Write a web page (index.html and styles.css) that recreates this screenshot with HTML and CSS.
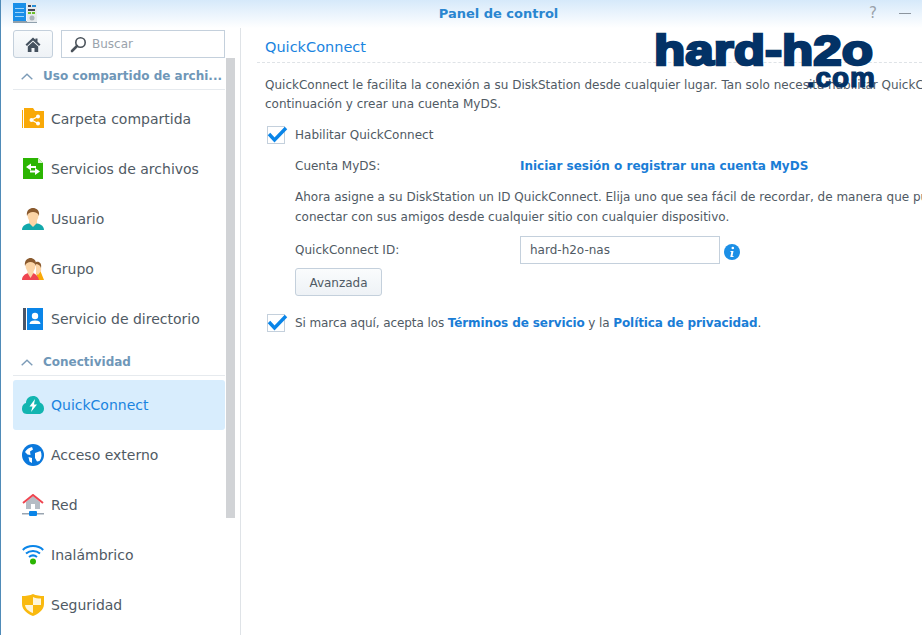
FILE: index.html
```html
<!DOCTYPE html>
<html lang="es">
<head>
<meta charset="utf-8">
<title>Panel de control</title>
<link rel="stylesheet" href="styles.css">
</head>
<body>
<div class="window">
  <header class="titlebar">
    <svg class="app-icon" width="24" height="20" viewBox="0 0 24 20">
      <rect x="0" y="0" width="13" height="20" fill="#1a8fe8"/>
      <rect x="0" y="18" width="24" height="2" fill="#8fa0ad"/>
      <rect x="2" y="5" width="9" height="1" fill="#9fd4fa"/><rect x="2" y="9" width="9" height="1" fill="#9fd4fa"/><rect x="2" y="13" width="9" height="1" fill="#9fd4fa"/>
      <rect x="14" y="0" width="10" height="19" fill="#e6eaed"/>
      <rect x="15" y="2" width="3" height="2" fill="#445"/><rect x="19" y="2" width="4" height="2" fill="#2a8fd8"/>
      <rect x="15" y="6" width="7" height="2" fill="#445"/><rect x="15" y="9" width="3" height="2" fill="#6bbf2a"/><rect x="19" y="9" width="3" height="2" fill="#6bbf2a"/>
      <circle cx="19" cy="15" r="2.500" fill="#aab3ba"/>
    </svg>
    <h1 class="app-title">Panel de control</h1>
    <div class="win-actions">
      <span class="win-help">?</span>
      <span class="win-min"></span>
    </div>
  </header>
  <div class="body">
    <aside class="sidebar">
      <div class="toolbar">
        <button class="home" aria-label="Inicio">
          <svg width="16" height="15" viewBox="0 0 16 15"><path d="M8 0.5 L0.5 7.5 L2 9 L8 3.4 L14 9 L15.500 7.500 L12.500 4.700 L12.500 1.500 L10.500 1.500 L10.500 2.800 Z M8 4.800 L2.800 9.600 L2.800 15 L6.500 15 L6.500 11 L9.500 11 L9.500 15 L13.200 15 L13.200 9.600 Z" fill="#44515e"/></svg>
        </button>
        <div class="search">
          <svg width="17" height="17" viewBox="0 0 17 17"><circle cx="10.500" cy="6.500" r="4.700" fill="none" stroke="#4a525a" stroke-width="1.600"/><path d="M7 10 L2 15" stroke="#4a525a" stroke-width="2.600" stroke-linecap="round"/></svg>
          <span>Buscar</span>
        </div>
      </div>
      <div class="nav-scroll">
        <div class="group"><svg width="12" height="7" viewBox="0 0 12 7"><path d="M0.700 6.300 L6 1.200 L11.300 6.300" fill="none" stroke="#7d9cb8" stroke-width="1.400"/></svg><span>Uso compartido de archi...</span></div>
        <a class="item">
          <svg class="ico" width="22" height="22" viewBox="0 0 22 22"><rect x="0" y="2" width="1" height="18" fill="#f9a908"/><path d="M2 0 H11 L13 3 H22 V20 H2 Z" fill="#f9a908"/><g fill="#fff"><circle cx="9.500" cy="12" r="2"/><circle cx="16" cy="8.500" r="2"/><circle cx="16" cy="15.500" r="2"/></g><path d="M16 8.500 L9.500 12 L16 15.500" stroke="#fff" stroke-width="1.200" fill="none"/></svg>
          <span>Carpeta compartida</span></a>
        <a class="item">
          <svg class="ico" width="22" height="22" viewBox="0 0 22 22"><path d="M1 0 H16 L21 5 V21 H1 Z" fill="#2bb502"/><path d="M16 0 L21 5 H16 Z" fill="#d8f3cc"/><path d="M9 5.500 L4 9 L9 12.500 V10 H14 V8 H9 Z M13 10 L18 13.500 L13 17 V14.600 H8 V12.600 H13 Z" fill="#fff"/></svg>
          <span>Servicios de archivos</span></a>
        <a class="item">
          <svg class="ico" width="22" height="22" viewBox="0 0 22 22"><path d="M0 22 C0 17 5 16 8 15 H14 C17 16 22 17 22 22 Z" fill="#12a8ab"/><path d="M11 19 L7 15 V12 H15 V15 Z" fill="#fbd4a6"/><ellipse cx="11" cy="7.500" rx="5.500" ry="7" fill="#fbd4a6"/><path d="M5 8 C4 2 8 0 11 0 C14 0 18 2 17 8 C16 5 14 4 11 4 C8 4 6 5 5 8 Z" fill="#8a5a2e"/></svg>
          <span>Usuario</span></a>
        <a class="item">
          <svg class="ico" width="22" height="22" viewBox="0 0 22 22"><path d="M14 14 L18 12 L22 22 H16 Z" fill="#f9a908"/><path d="M14 5 C17 3 20 6 19 13 L16 17 L14 15 Z" fill="#fbd4a6"/><path d="M14 4 C17 3 20 5 19 10 C18 7 16 6 14 6 Z" fill="#8a5a2e"/><path d="M0 22 C0 18 3 16 6 15 H11 C14 16 16 18 17 22 Z" fill="#ef4550"/><path d="M8.500 20 L5.500 15 V12 H11.500 V15 Z" fill="#fbd4a6"/><ellipse cx="8.500" cy="7.500" rx="5" ry="7" fill="#fbd4a6"/><path d="M3 8 C2 2 6 0 8.500 0 C11 0 15 2 14 8 C13 5 11 4 8.500 4 C6 4 4 5 3 8 Z" fill="#8a5a2e"/></svg>
          <span>Grupo</span></a>
        <a class="item">
          <svg class="ico" width="22" height="22" viewBox="0 0 22 22"><rect x="1" y="0" width="3" height="22" fill="#4a5568"/><rect x="5" y="0" width="16" height="22" fill="#0a85e8"/><circle cx="13" cy="8" r="3.200" fill="#fff"/><path d="M7.500 16 C8 13 10 12.500 13 12.500 C16 12.500 18 13 18.500 16 Z" fill="#fff"/></svg>
          <span>Servicio de directorio</span></a>
        <div class="group"><svg width="12" height="7" viewBox="0 0 12 7"><path d="M0.700 6.300 L6 1.200 L11.300 6.300" fill="none" stroke="#7d9cb8" stroke-width="1.400"/></svg><span>Conectividad</span></div>
        <a class="item active">
          <svg class="ico" width="22" height="22" viewBox="0 1 22 20"><path d="M5 20 C1 20 0 17 0 14.500 C0 11 2 9.500 4 9 C4 5 7 2 11 2 C15 2 17 4.500 18 8.500 C20.500 9.500 22 11.500 22 14.500 C22 17.500 20 20 17 20 Z" fill="#12b5b0"/><path d="M13 5 L7.500 12.500 H10.500 L9 18 L15 10.500 H12 Z" fill="#fff"/></svg>
          <span>QuickConnect</span></a>
        <a class="item">
          <svg class="ico" width="22" height="22" viewBox="0 0 22 22"><circle cx="11" cy="11" r="11" fill="#0a78dc"/><path d="M3 8 C4.500 5.500 7 3.500 10 3 L11 5.500 L8 7.500 L8.500 11 L5.500 10.500 Z M13 9 L18.500 7 C20 10 20 14 17.500 17 L15 17.500 L13 14 Z M6.500 13 L10 14 L10 19 L7.500 17.500 Z" fill="#fff"/></svg>
          <span>Acceso externo</span></a>
        <a class="item">
          <svg class="ico" width="22" height="22" viewBox="0 0 22 22"><path d="M4 8 L11 2 L18 8 V15 H4 Z" fill="#b5bcc4"/><path d="M1 9 L11 1 L21 9" fill="none" stroke="#ef4550" stroke-width="2"/><rect x="9" y="10" width="4" height="5" fill="#fff"/><rect x="0" y="19" width="22" height="1.500" fill="#9aa5b1"/><rect x="7" y="17" width="8" height="5" rx="1" fill="#0a85e8"/></svg>
          <span>Red</span></a>
        <a class="item">
          <svg class="ico" width="22" height="22" viewBox="0 0 22 22"><g fill="none" stroke="#0a85e8" stroke-width="2"><path d="M0.800 6 C6 0.800 16 0.800 21.200 6"/><path d="M4 9.500 C8 6 14 6 18 9.500"/><path d="M7 13 C9.500 11 12.500 11 15 13"/></g><circle cx="11" cy="17.500" r="3" fill="#2bb502"/></svg>
          <span>Inalámbrico</span></a>
        <a class="item">
          <svg class="ico" width="22" height="22" viewBox="0 0 22 22"><path d="M0 2 C4 2 8 1.500 11 0 C14 1.500 18 2 22 2 V10 C22 16 16 20 11 22 C6 20 0 16 0 10 Z" fill="#f9b90f"/><path d="M11 3 C13 4 16 4.500 19 4.500 V11 H11 Z M11 11 V19 C7 17.500 3.500 15 3 11 Z" fill="#fff" opacity=".85"/></svg>
          <span>Seguridad</span></a>
      </div>
      <div class="scrollbar"></div>
    </aside>
    <main class="content">
      <h2 class="section-title">QuickConnect</h2>
      <p class="para">QuickConnect le facilita la conexión a su DiskStation desde cualquier lugar. Tan solo necesita habilitar QuickConnect a<br>continuación y crear una cuenta MyDS.</p>
      <label class="check check-first">
        <span class="box"><svg width="21" height="17" viewBox="0 0 21 17"><path d="M2 8 L7.500 14 L19 2" fill="none" stroke="#0a85e8" stroke-width="3.400"/></svg></span>
        <span>Habilitar QuickConnect</span>
      </label>
      <div class="indent">
        <div class="form-row row-account"><span class="form-label">Cuenta MyDS:</span><a class="link">Iniciar sesión o registrar una cuenta MyDS</a></div>
        <p class="para para-id">Ahora asigne a su DiskStation un ID QuickConnect. Elija uno que sea fácil de recordar, de manera que pueda<br>conectar con sus amigos desde cualquier sitio con cualquier dispositivo.</p>
        <div class="form-row row-id">
          <span class="form-label">QuickConnect ID:</span>
          <div class="input">hard-h2o-nas</div>
          <svg class="info" width="16" height="16" viewBox="0 0 16 16"><circle cx="8" cy="8" r="8" fill="#1b8fe6"/><circle cx="8.800" cy="4" r="1.300" fill="#fff"/><path d="M6.500 7 H9.500 L8.500 12 H9.500 V13 H6.300 L7.300 8 H6.500 Z" fill="#fff"/></svg>
        </div>
        <button class="btn">Avanzada</button>
      </div>
      <label class="check check-terms">
        <span class="box"><svg width="21" height="17" viewBox="0 0 21 17"><path d="M2 8 L7.500 14 L19 2" fill="none" stroke="#0a85e8" stroke-width="3.400"/></svg></span>
        <span class="terms">Si marca aquí, acepta los <a class="link">Términos de servicio</a> y la <a class="link">Política de privacidad</a>.</span>
      </label>
    </main>
  </div>
  <div class="watermark"><span class="wm-main">hard-h2o</span><span class="wm-sub">.com</span></div>
</div>
</body>
</html>
```
FILE: styles.css
```css
* { box-sizing: border-box; }
html, body { margin: 0; height: 100%; overflow: hidden; background: #fff; }
body { font-family: "DejaVu Sans", Verdana, sans-serif; font-size: 12px; color: #505a64; }
.window { position: relative; width: 922px; height: 635px; display: flex; flex-direction: column; border-left: 1px solid #4f8bb8; overflow: hidden; }
.titlebar { height: 28px; flex: none; display: flex; align-items: flex-start; padding: 3px 0 0 12px; background: linear-gradient(#d6e9fa, #fff); position: relative; }
.app-title { position: absolute; left: 74px; right: 0; top: 6px; margin: 0; text-align: center; font-size: 13px; line-height: 15px; font-weight: bold; color: #2a86d0; }
.win-actions { position: absolute; left: 868px; top: 5px; display: flex; align-items: center; gap: 22px; }
.win-help { font-size: 15px; color: #9aa2aa; line-height: 16px; }
.win-min { width: 12px; height: 1px; background: #8c959e; margin-top: 1px; }
.body { flex: 1; display: flex; min-height: 0; }
.sidebar { position: relative; width: 240px; flex: none; padding-left: 12px; border-right: 1px solid #dfe3e7; }
.toolbar { display: flex; gap: 8px; height: 30px; padding-top: 2px; }
.home { width: 40px; height: 28px; padding: 0; display: flex; align-items: center; justify-content: center; background: linear-gradient(#fafcfd, #eef2f6); border: 1px solid #c4d0dc; border-radius: 3px; }
.search { width: 164px; height: 28px; display: flex; align-items: center; gap: 5px; padding-left: 8px; border: 1px solid #c4d0dc; color: #9aa3ac; font-size: 12px; }
.nav-scroll { width: 212px; }
.group { height: 32px; display: flex; align-items: center; gap: 10px; padding: 5px 0 0 8px; margin-bottom: 4px; border-bottom: 1px solid #e6eaee; font-weight: bold; font-size: 12px; color: #6f97b8; white-space: nowrap; }
.group svg { flex: none; }
.item { height: 50px; display: flex; align-items: center; gap: 7px; padding-left: 9px; font-size: 14px; color: #505a64; border-radius: 3px; }
.ico { flex: none; }
.active { background: #d8edfd; color: #1a84e0; }
.scrollbar { position: absolute; left: 225px; top: 30px; width: 9px; height: 460px; background: #d1d3d6; }
.content { flex: 1; min-width: 0; padding-left: 24px; }
.section-title { margin: 10px 0 0 -8px; padding: 0 0 6px 8px; font-size: 14.500px; font-weight: normal; color: #1a84e0; line-height: 18px; border-bottom: 1px dashed #dfe3e7; }
.para { margin: 0; line-height: 19px; white-space: nowrap; }
.content > .para { margin-top: 13px; }
.check { display: flex; align-items: center; gap: 10px; padding-left: 2px; }
.box { position: relative; width: 18px; height: 18px; border: 1px solid #c4d0dc; display: flex; flex: none; }
.box svg { position: absolute; left: -1px; top: -1px; }
.check-first { margin-top: 12px; height: 18px; }
.indent { padding-left: 30px; }
.form-row { display: flex; align-items: center; }
.form-label { width: 225px; flex: none; }
.row-account { margin-top: 13px; height: 18px; }
.link { color: #1a7dd6; font-weight: bold; }
.para-id { margin-top: 12px; line-height: 20px; }
.row-id { margin-top: 9px; height: 28px; }
.input { width: 200px; height: 28px; display: flex; align-items: center; padding-left: 9px; border: 1px solid #c4d0dc; }
.info { margin-left: 4px; margin-top: 3px; }
.btn { display: block; width: 87px; height: 28px; margin-top: 4px; padding: 2px 0 0; background: linear-gradient(#fafcfd, #eef2f6); border: 1px solid #c4d0dc; border-radius: 3px; font: inherit; color: #505a64; }
.check-terms { margin-top: 18px; height: 18px; }
.terms { letter-spacing: -.1px; }
.watermark { position: absolute; left: 652px; top: 27px; width: 225px; color: #033266; font-family: "Liberation Sans", Arial, sans-serif; font-weight: bold; }
.wm-main { display: block; font-size: 43px; line-height: 46px; -webkit-text-stroke: 2.500px #033266; white-space: nowrap; transform: scaleX(1.19); transform-origin: left; margin-left: 1px; }
.wm-sub { display: block; text-align: right; font-size: 28px; line-height: 20px; margin-top: -5px; padding-right: 2px; letter-spacing: 1px; -webkit-text-stroke: 1.200px #033266; }
```
